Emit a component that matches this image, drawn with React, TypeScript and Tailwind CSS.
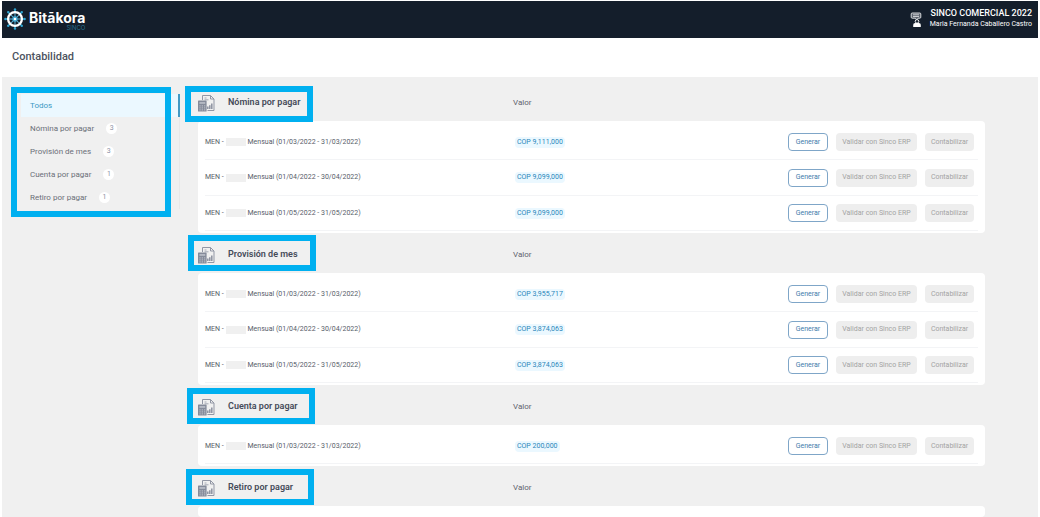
import React from "react";

type Entry = { from: string; to: string; value: string };
type Section = { title: string; frame: string; entries: Entry[] };

const sections: Section[] = [
  {
    title: "Nómina por pagar",
    frame: "-left-[13px] top-[5px]",
    entries: [
      { from: "01/03/2022", to: "31/03/2022", value: "COP 9,111,000" },
      { from: "01/04/2022", to: "30/04/2022", value: "COP 9,099,000" },
      { from: "01/05/2022", to: "31/05/2022", value: "COP 9,099,000" },
    ],
  },
  {
    title: "Provisión de mes",
    frame: "-left-[10px] top-[2px]",
    entries: [
      { from: "01/03/2022", to: "31/03/2022", value: "COP 3,955,717" },
      { from: "01/04/2022", to: "30/04/2022", value: "COP 3,874,063" },
      { from: "01/05/2022", to: "31/05/2022", value: "COP 3,874,063" },
    ],
  },
  {
    title: "Cuenta por pagar",
    frame: "-left-[11px] top-[3px]",
    entries: [{ from: "01/03/2022", to: "31/03/2022", value: "COP 200,000" }],
  },
  { title: "Retiro por pagar", frame: "-left-[12px] top-[3px]", entries: [] },
];

const filters = [
  { label: "Nómina por pagar", count: 3 },
  { label: "Provisión de mes", count: 3 },
  { label: "Cuenta por pagar", count: 1 },
  { label: "Retiro por pagar", count: 1 },
];

const spokes = [0, 45, 90, 135, 180, 225, 270, 315];

function WheelLogo() {
  return (
    <svg viewBox="0 0 22 22" className="size-[22px]" aria-hidden="true">
      {spokes.map((a) => (
        <g key={a} transform={`rotate(${a} 11 11)`}>
          <path d="M11 9.5V5" stroke="#5fb9dd" strokeWidth="1" />
          <path d="M11 4V1.4" stroke="#2fa3cf" strokeWidth="1.6" />
          <circle cx="11" cy="1.4" r="1.2" fill="#2fa3cf" />
        </g>
      ))}
      <circle cx="11" cy="11" r="6.9" fill="none" stroke="#fff" strokeWidth="2.3" />
      <circle cx="11" cy="11" r="2.7" fill="#3fa9d3" />
      <circle cx="11" cy="11" r="1.3" fill="#fff" />
    </svg>
  );
}

function UserIcon() {
  return (
    <svg viewBox="0 0 12 16" className="h-4 w-3" aria-hidden="true">
      <path
        d="M2.2 1h7.6q1 0 1 1v3.2q0 1-1 1H8L6.6 8 5.4 6.2H2.2q-1 0-1-1V2q0-1 1-1z"
        fill="#5a616c"
        stroke="#e4e6e9"
        strokeWidth="0.9"
      />
      <path d="M3 2.8h6M3 4.5h6" stroke="#e4e6e9" strokeWidth="0.8" />
      <circle cx="7" cy="9.4" r="1.8" fill="#141e2b" stroke="#fff" strokeWidth="0.9" />
      <path d="M3.2 15v-2q0-1.9 1.9-1.9h3.8q1.9 0 1.9 1.9v2z" fill="#fff" />
    </svg>
  );
}

function LedgerIcon() {
  return (
    <svg viewBox="0 0 17 18" className="h-[18px] w-[17px]" fill="none" aria-hidden="true">
      <path d="M4.5 6V1.5h8l3.5 3.5v11.5H9.5" stroke="#9297a5" />
      <path d="M12.5 1.5V5H16" stroke="#9297a5" />
      <path d="M6.5 4h2M6.5 5.8h4" stroke="#9297a5" strokeWidth="0.8" />
      <path d="M9.8 15v-2.6M11.8 15v-3.8M13.8 15V9.4" stroke="#8d92a0" strokeWidth="1.5" />
      <rect x="0" y="6.5" width="8.6" height="11" rx="0.6" fill="#858b9a" />
      <rect x="1.4" y="8" width="5.8" height="1.9" fill="#b4b8c3" />
      <path
        d="M1.4 11.9h1.3M3.7 11.9H5M6 11.9h1.3M1.4 13.9h1.3M3.7 13.9H5M6 13.9h1.3M1.4 15.9h1.3M3.7 15.9H5M6 15.9h1.3"
        stroke="#c6c9d1"
        strokeWidth="0.9"
      />
    </svg>
  );
}

function EntryRow({ entry }: { entry: Entry }) {
  return (
    <li className="flex h-[35px] items-center border-b border-[#f3f4f6] pr-1 text-[7px] even:h-9">
      <div className="flex w-[310px] items-center whitespace-pre text-[#575d69]">
        <span>MEN - </span>
        <span className="h-2 w-5 bg-[#f0f0f0]" />
        <span className="ml-0.5">
          Mensual ({entry.from} - {entry.to})
        </span>
      </div>
      <span className="rounded-sm bg-[#ebf8ff] px-0.5 leading-[11px] text-[#2a86ba]">{entry.value}</span>
      <div className="ml-auto flex gap-2">
        <button className="h-[18px] w-10 rounded-sm border border-[#7fa6c8] bg-white text-[#3f7cab]">Generar</button>
        <button disabled className="h-[18px] w-[81px] rounded-sm bg-[#eeeeee] text-[#a3a3a3]">
          Validar con Sinco ERP
        </button>
        <button disabled className="h-[18px] w-[49px] rounded-sm bg-[#eeeeee] text-[#a3a3a3]">
          Contabilizar
        </button>
      </div>
    </li>
  );
}

export default function App() {
  return (
    <div className="flex min-h-screen flex-col bg-white px-0.5 pt-px font-['Roboto',sans-serif]">
      <header className="flex h-[37px] items-center justify-between bg-[#141e2b] pl-0.5 pr-1.5 text-white">
        <div className="flex items-center gap-[3px] pb-0.5">
          <WheelLogo />
          <div className="flex flex-col items-end pt-1 font-['Inter',sans-serif]">
            <div className="text-[14px] leading-[14px] font-bold">Bitākora</div>
            <div className="text-[6px] leading-[6px] text-[#27708f]">SINCO</div>
          </div>
        </div>
        <div className="flex items-center gap-2">
          <UserIcon />
          <div className="pb-1 text-right">
            <div className="text-[9px] leading-3 font-medium">SINCO COMERCIAL 2022</div>
            <div className="text-[7px] leading-[10px]">Maria Fernanda Caballero Castro</div>
          </div>
        </div>
      </header>

      <div className="flex h-[39px] items-center px-2.5">
        <h1 className="text-[11px] font-medium text-[#4d5360]">Contabilidad</h1>
      </div>

      <div className="flex flex-1 bg-[#f0f0f0] pt-1">
        <aside className="relative ml-[19px] mt-[13px] w-[159px] self-start">
          <nav className="text-[8px] text-[#6b6f78]">
            <a href="#todos" className="flex h-[23px] items-center border-r-2 border-[#4299c4] bg-[#ebf8ff] pl-[9px] text-[#3c99c4]">
              Todos
            </a>
            {filters.map((f) => (
              <a
                key={f.label}
                href="#filtro"
                className="flex h-[23px] items-center gap-3 border-r border-[#e8e8e8] pl-[9px]"
              >
                {f.label}
                <span className="flex size-[11px] items-center justify-center rounded-full bg-white text-[7px] text-[#8d92a5]">
                  {f.count}
                </span>
              </a>
            ))}
          </nav>
          <div className="pointer-events-none absolute -left-2.5 -top-[7px] h-[130px] w-40 border-[6px] border-[#00b0f0]" />
        </aside>

        <main className="ml-[18px] mr-[53px] flex flex-1 flex-col">
          {sections.map((s) => (
            <section key={s.title} className="flex flex-col last:flex-1">
              <div className="relative flex h-10 items-center pt-1">
                <div className="flex w-[315px] items-center gap-[13px]">
                  <LedgerIcon />
                  <h2 className="text-[9px] font-semibold text-[#454b59]">{s.title}</h2>
                </div>
                <span className="text-[8px] text-[#5f646e]">Valor</span>
                <div
                  className={`pointer-events-none absolute h-9 w-32 border-[6px] border-[#00b0f0] ${s.frame}`}
                />
              </div>
              <ul className="flex-1 rounded-sm bg-white px-[7px] pb-[2px] pt-1">
                {s.entries.map((e) => (
                  <EntryRow key={e.from} entry={e} />
                ))}
              </ul>
            </section>
          ))}
        </main>
      </div>
    </div>
  );
}
